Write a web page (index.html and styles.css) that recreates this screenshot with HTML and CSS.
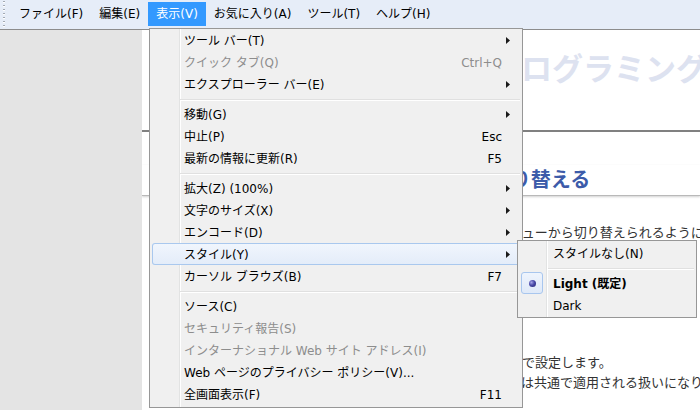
FILE: index.html
```html
<!DOCTYPE html>
<html lang="ja">
<head>
<meta charset="utf-8">
<title>表示メニュー</title>
<link rel="stylesheet" href="styles.css">
</head>
<body>
<div class="window">
  <nav class="menubar">
    <span class="grip"></span>
    <span class="mb-item">ファイル(F)</span>
    <span class="mb-item">編集(E)</span>
    <span class="mb-item active">表示(V)</span>
    <span class="mb-item">お気に入り(A)</span>
    <span class="mb-item">ツール(T)</span>
    <span class="mb-item">ヘルプ(H)</span>
  </nav>

  <div class="page">
    <aside class="sidebar"></aside>
    <main class="content">
      <header class="banner"><h1 class="banner-title">はじめてのプログラミング講座</h1></header>
      <h2 class="heading">閲覧者がブラウザのメニューで配色を切り替える</h2>
      <p class="text">このサイトでは、ページの配色をブラウザの「スタイル」メニューから切り替えられるようにしています。</p>
      <p class="text later">スタイルの名前は、リンク要素のタイトル属性に書いた文字列で設定します。<br>タイトル属性を指定していない通常のスタイルシートについては共通で適用される扱いになります。</p>
    </main>
  </div>

  <div class="menu dropdown">
    <div class="mi"><span class="chk"></span><span class="lbl">ツール バー(T)</span><span class="key"></span><span class="sub"><svg width="4" height="7" viewBox="0 0 4 7"><path d="M0 0L4 3.5L0 7Z"/></svg></span></div>
    <div class="mi dis"><span class="chk"></span><span class="lbl">クイック タブ(Q)</span><span class="key">Ctrl+Q</span><span class="sub"></span></div>
    <div class="mi"><span class="chk"></span><span class="lbl">エクスプローラー バー(E)</span><span class="key"></span><span class="sub"><svg width="4" height="7" viewBox="0 0 4 7"><path d="M0 0L4 3.5L0 7Z"/></svg></span></div>
    <div class="sep"></div>
    <div class="mi"><span class="chk"></span><span class="lbl">移動(G)</span><span class="key"></span><span class="sub"><svg width="4" height="7" viewBox="0 0 4 7"><path d="M0 0L4 3.5L0 7Z"/></svg></span></div>
    <div class="mi"><span class="chk"></span><span class="lbl">中止(P)</span><span class="key">Esc</span><span class="sub"></span></div>
    <div class="mi"><span class="chk"></span><span class="lbl">最新の情報に更新(R)</span><span class="key">F5</span><span class="sub"></span></div>
    <div class="sep"></div>
    <div class="mi"><span class="chk"></span><span class="lbl">拡大(Z) (100%)</span><span class="key"></span><span class="sub"><svg width="4" height="7" viewBox="0 0 4 7"><path d="M0 0L4 3.5L0 7Z"/></svg></span></div>
    <div class="mi"><span class="chk"></span><span class="lbl">文字のサイズ(X)</span><span class="key"></span><span class="sub"><svg width="4" height="7" viewBox="0 0 4 7"><path d="M0 0L4 3.5L0 7Z"/></svg></span></div>
    <div class="mi"><span class="chk"></span><span class="lbl">エンコード(D)</span><span class="key"></span><span class="sub"><svg width="4" height="7" viewBox="0 0 4 7"><path d="M0 0L4 3.5L0 7Z"/></svg></span></div>
    <div class="mi hot"><span class="chk"></span><span class="lbl">スタイル(Y)</span><span class="key"></span><span class="sub"><svg width="4" height="7" viewBox="0 0 4 7"><path d="M0 0L4 3.5L0 7Z"/></svg></span></div>
    <div class="mi"><span class="chk"></span><span class="lbl">カーソル ブラウズ(B)</span><span class="key">F7</span><span class="sub"></span></div>
    <div class="sep"></div>
    <div class="mi"><span class="chk"></span><span class="lbl">ソース(C)</span><span class="key"></span><span class="sub"></span></div>
    <div class="mi dis"><span class="chk"></span><span class="lbl">セキュリティ報告(S)</span><span class="key"></span><span class="sub"></span></div>
    <div class="mi dis"><span class="chk"></span><span class="lbl">インターナショナル Web サイト アドレス(I)</span><span class="key"></span><span class="sub"></span></div>
    <div class="mi"><span class="chk"></span><span class="lbl">Web ページのプライバシー ポリシー(V)...</span><span class="key"></span><span class="sub"></span></div>
    <div class="mi"><span class="chk"></span><span class="lbl">全画面表示(F)</span><span class="key">F11</span><span class="sub"></span></div>
  </div>

  <div class="menu submenu">
    <div class="mi"><span class="chk"></span><span class="lbl">スタイルなし(N)</span></div>
    <div class="sep"></div>
    <div class="mi"><span class="chk radio"><span class="dot"></span></span><span class="lbl bold">Light (既定)</span></div>
    <div class="mi"><span class="chk"></span><span class="lbl">Dark</span></div>
  </div>
</div>
</body>
</html>
```
FILE: styles.css
```css
* {
  box-sizing: border-box;
  margin: 0;
  padding: 0;
}

html, body {
  width: 700px;
  height: 410px;
  overflow: hidden;
}

body {
  font-family: "DejaVu Sans", "Noto Sans CJK JP", sans-serif;
  font-size: 12px;
  color: #000;
  background: #fff;
}

.window {
  position: relative;
  width: 700px;
  height: 410px;
  display: flex;
  flex-direction: column;
}

/* ---------- menu bar ---------- */
.menubar {
  flex: none;
  height: 30px;
  display: flex;
  align-items: flex-start;
  padding-top: 2px;
  background: #e6edf8;
  border-bottom: 1px solid #8c8c8c;
  white-space: nowrap;
}

.grip {
  width: 2px;
  height: 28px;
  margin: -2px 6px 0 3px;
  background: repeating-linear-gradient(to bottom, transparent 0 1px, #a2a9b3 1px 2px, #ffffff 2px 3px, transparent 3px 4px);
}

.mb-item {
  height: 24px;
  line-height: 23px;
  padding: 1px 8px 0;
}

.mb-item.active {
  background: #3399ff;
  color: #fff;
}

/* ---------- page ---------- */
.page {
  flex: 1;
  display: flex;
  min-height: 0;
}

.sidebar {
  flex: none;
  width: 142px;
  background: #e4e4e4;
}

.content {
  flex: 1;
  min-width: 0;
  background: #fff;
  overflow: hidden;
  white-space: nowrap;
  font-family: "Noto Sans CJK JP", sans-serif;
}

.banner {
  height: 102px;
  border-bottom: 2px solid #808080;
  padding: 17px 0 0 193px;
}

.banner-title {
  font-size: 31px;
  line-height: 40px;
  font-weight: bold;
  color: #dde2f0;
}

.heading {
  margin-top: 33px;
  padding: 0 0 2px 10px;
  font-size: 20px;
  line-height: 28px;
  font-weight: bold;
  color: #3c5ba9;
  border-bottom: 1px solid #b9b9b9;
  box-shadow: 0 1px 2px rgba(0, 0, 0, 0.18);
}

.text {
  margin-top: 26px;
  padding-left: 16px;
  font-size: 13px;
  line-height: 20px;
  color: #333;
}

.text.later {
  margin-top: 110px;
}

/* ---------- menus ---------- */
.menu {
  position: absolute;
  border: 1px solid #979797;
  background-color: #f0f0f0;
  white-space: nowrap;
}

.dropdown {
  left: 149px;
  top: 28px;
  width: 374px;
  padding: 0 2px 2px 2px;
  background-image: linear-gradient(to right, transparent 29px, #e2e3e3 29px, #e2e3e3 30px, #ffffff 30px, #ffffff 31px, transparent 31px);
}

.submenu {
  left: 517px;
  top: 240px;
  width: 180px;
  padding: 1px 2px 1px 3px;
  background-image: linear-gradient(to right, transparent 28px, #e2e3e3 28px, #e2e3e3 29px, #ffffff 29px, #ffffff 30px, transparent 30px);
}

.mi {
  display: flex;
  align-items: center;
  height: 22px;
  border-radius: 3px;
}

.mi.dis {
  color: #8d8d8d;
}

.mi.hot {
  background: linear-gradient(to bottom, #f1f6fd, #e3ecf9);
  box-shadow: inset 0 0 0 1px #a9c8ee;
}

.chk {
  flex: none;
  width: 22px;
  height: 22px;
}

.lbl,
.key {
  height: 22px;
  padding-top: 2px;
  line-height: 20px;
}

.lbl {
  flex: 1;
  margin-left: 10px;
}

.lbl.bold {
  font-weight: bold;
}

.key {
  flex: none;
  text-align: right;
}

.sub {
  flex: none;
  width: 18px;
  padding-left: 4px;
  display: flex;
  align-items: center;
}

.sub svg {
  display: block;
  fill: #1a1a1a;
}

.sep {
  height: 8px;
  margin-left: 28px;
  background: linear-gradient(to bottom, transparent 4px, #e0e0e0 4px, #e0e0e0 5px, #ffffff 5px, #ffffff 6px, transparent 6px);
}

.submenu .sep {
  margin-left: 27px;
}

.radio {
  display: flex;
  align-items: center;
  justify-content: center;
  border: 1px solid #a8c6ee;
  border-radius: 3px;
  background: linear-gradient(to bottom, #eef4fd, #dfe9f8);
}

.dot {
  width: 7px;
  height: 7px;
  border-radius: 50%;
  background: radial-gradient(circle at 35% 35%, #a4a4e6 0, #4a4aa8 45%, #25256e 100%);
}
```
